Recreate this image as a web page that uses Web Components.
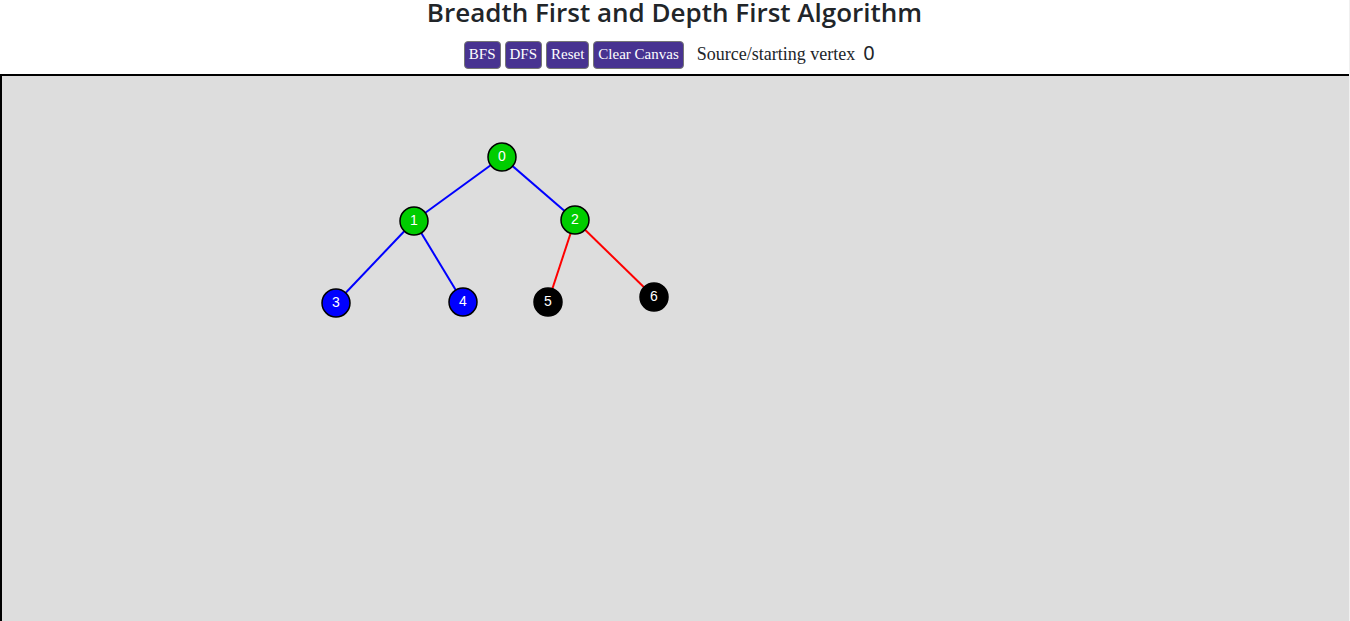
<!DOCTYPE html>
<html lang="en">
<head>
<meta charset="utf-8">
<title>Breadth First and Depth First Algorithm</title>
<style>
html, body { height: 100%; margin: 0; }
body { background: #fff; color: #212529; font-family: "Open Sans", sans-serif; overflow: hidden; }
</style>
</head>
<body>
<graph-app></graph-app>
<script>
class ToolButton extends HTMLElement {
  constructor() {
    super();
    this.attachShadow({ mode: "open" }).innerHTML = `
      <style>
        :host { display: block; }
        button { display: block; height: 28px; margin: 0; padding: 0 4px 2px; border: 1px solid #767676;
          border-radius: 4px; background: #483391; color: #fff; white-space: nowrap;
          font: 15px/24px "Liberation Serif", serif; }
      </style>
      <button type="button"><slot></slot></button>`;
  }
}
customElements.define("tool-button", ToolButton);

class SourceVertex extends HTMLElement {
  constructor() {
    super();
    this.attachShadow({ mode: "open" }).innerHTML = `
      <style>
        :host { display: flex; align-items: center; gap: 8px; }
        label { padding-bottom: 2px; font: 18px/24px "Liberation Serif", serif; white-space: nowrap; }
        input { box-sizing: border-box; width: 22px; height: 28px; padding: 0 0 6px; margin: 0; border: 0; background: none; outline: 0;
          color: #212529; font: 20px/22px "Noto Sans", sans-serif; }
      </style>
      <label for="source">Source/starting vertex</label>
      <input id="source" type="text" value="0">`;
  }
}
customElements.define("source-vertex", SourceVertex);

class GraphCanvas extends HTMLElement {
  constructor() {
    super();
    const nodes = [
      [500, 81, "#00cd00"], [412, 145, "#00cd00"], [573, 144, "#00cd00"],
      [334, 227, "#00f"], [461, 226, "#00f"], [546, 226, "#000"], [652, 221, "#000"]
    ];
    const edges = [[0, 1, "#00f"], [0, 2, "#00f"], [1, 3, "#00f"], [1, 4, "#00f"], [2, 5, "#f00"], [2, 6, "#f00"]];
    const lines = edges.map(([a, b, c]) =>
      `<line x1="${nodes[a][0]}" y1="${nodes[a][1]}" x2="${nodes[b][0]}" y2="${nodes[b][1]}" stroke="${c}"/>`).join("");
    const dots = nodes.map(([x, y, c], i) =>
      `<g transform="translate(${x} ${y})"><circle r="14" fill="${c}"/><text y="4">${i}</text></g>`).join("");
    this.attachShadow({ mode: "open" }).innerHTML = `
      <style>
        :host { display: block; background: #ddd; border: 2px solid #000; border-width: 2px 0 0 2px; overflow: hidden; }
        svg { display: block; width: 100%; height: 100%; }
        line { stroke-width: 2; }
        circle { stroke: #000; stroke-width: 1.5; }
        text { fill: #fff; font: 14px "Liberation Sans", sans-serif; text-anchor: middle; }
      </style>
      <svg role="img" aria-label="Graph">${lines}${dots}</svg>`;
  }
}
customElements.define("graph-canvas", GraphCanvas);

class GraphApp extends HTMLElement {
  constructor() {
    super();
    this.attachShadow({ mode: "open" }).innerHTML = `
      <style>
        :host { display: flex; flex-direction: column; height: 100%; box-sizing: border-box; border-right: 1px solid #f0f0f0; }
        h1 { margin: 0; text-align: center; font: 600 26px/24px "Open Sans", sans-serif; }
        nav { display: flex; justify-content: center; gap: 4px; padding: 17px 0 5px; }
        source-vertex { margin-left: 9px; }
        graph-canvas { flex: 1; min-height: 0; }
      </style>
      <h1>Breadth First and Depth First Algorithm</h1>
      <nav>
        <tool-button>BFS</tool-button>
        <tool-button>DFS</tool-button>
        <tool-button>Reset</tool-button>
        <tool-button>Clear Canvas</tool-button>
        <source-vertex></source-vertex>
      </nav>
      <graph-canvas></graph-canvas>`;
  }
}
customElements.define("graph-app", GraphApp);
</script>
</body>
</html>
